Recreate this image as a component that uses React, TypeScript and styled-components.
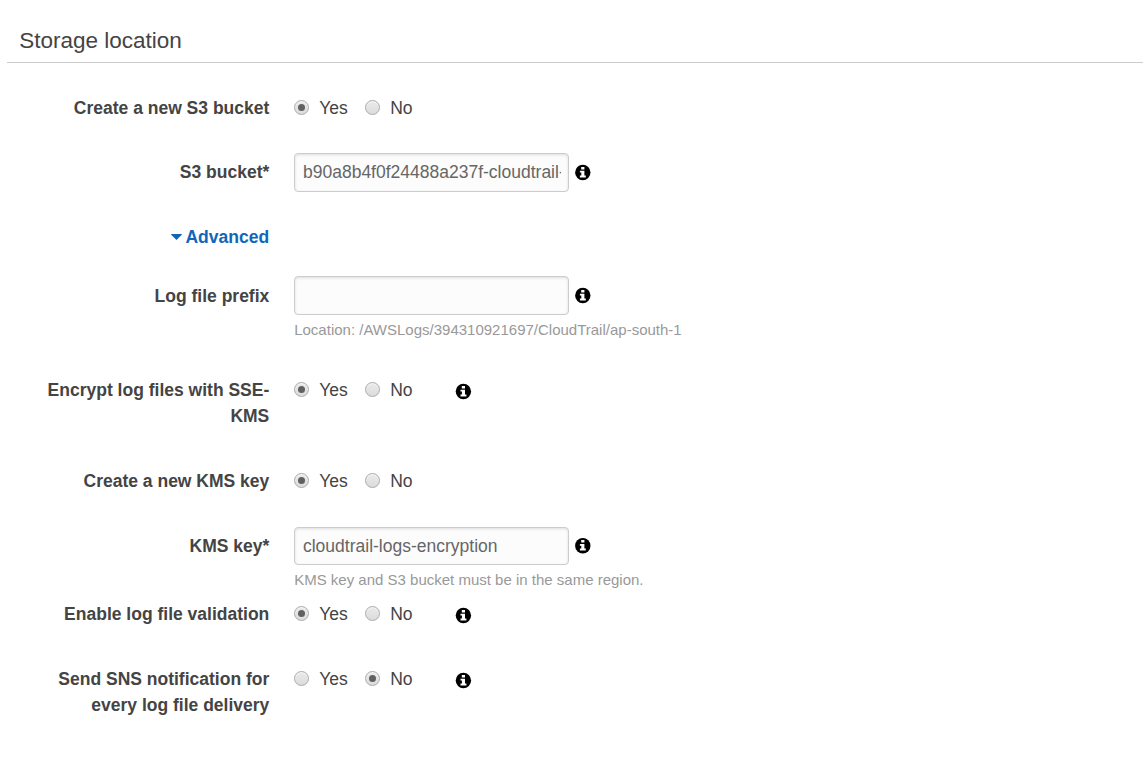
import React from "react";
import styled, { createGlobalStyle } from "styled-components";

const Global = createGlobalStyle`
  * { box-sizing: border-box; }
  body { margin: 0; background: #fff; color: #444; font: 17.5px/26px "Liberation Sans", Arial, sans-serif; overflow: hidden; }
`;
const Page = styled.main`padding: 23px 0 0 7px; height: 776px;`;
const Title = styled.h1`
  margin: 0 0 32px; padding: 0 12.25px; height: 40px; border-bottom: 1px solid #ccc;
  font-size: 22.5px; font-weight: 400; line-height: 35px;
`;
const Row = styled.div<{ $h: number }>`display: flex; height: ${(p) => p.$h}px;`;
const Label = styled.div<{ $top?: number }>`
  width: 262.3px; padding-top: ${(p) => p.$top ?? 0}px; padding-left: 30px; margin-right: 24.9px;
  font-weight: 700; text-align: right; flex: none;
`;
const Advanced = styled.span`
  color: #1166bb; display: flex; justify-content: flex-end; align-items: center; gap: 3.5px; margin-right: 0.2px;
`;
const Choices = styled.div`display: flex; height: 26px; align-items: center;`;
const Choice = styled.label<{ $w: number }>`display: flex; align-items: center; width: ${(p) => p.$w}px;`;
const Dot = styled.span<{ $on: boolean }>`
  width: 15px; height: 15px; border-radius: 50%; border: 1px solid #aaa; margin: 0 10px 1px 0;
  background: linear-gradient(#eaeaea, #dcdcdc); display: flex; align-items: center; justify-content: center;
  box-shadow: inset 0 1px 1px rgba(255, 255, 255, 0.7);
  &::after { content: ""; width: 7px; height: 7px; border-radius: 50%; background: ${(p) => (p.$on ? "#606060" : "transparent")}; }
`;
const Field = styled.div`display: flex; align-items: center; gap: 6px;`;
const Input = styled.input<{ $h?: number }>`
  width: 275px; height: ${(p) => p.$h ?? 39}px; padding: 0 7px 0 7.8px; border: 1px solid #ccc; border-radius: 4px;
  background: #fcfcfc; box-shadow: inset 0 1px 3px #ddd; color: #666; font: inherit;
`;
const Hint = styled.div`font-size: 15px; line-height: 22px; color: #999; margin-top: 4px;`;
const Icon = styled.svg<{ $inline?: boolean }>`
  display: block; flex: none; overflow: visible; margin: ${(p) => (p.$inline ? "2px 0 0 19px" : "0 0 1px")};
`;

const Info = ({ inline, dx = -0.2, dy = 0.5 }: { inline?: boolean; dx?: number; dy?: number }) => (
  <Icon $inline={inline} width="16" height="16" viewBox="0 0 16 16">
    <g transform={`translate(${dx} ${dy})`}>
      <circle cx="8" cy="8" r="7.7" fill="#000" />
      <path d="M6.4 2.4h3.2v2.5H6.4zM5.1 6.2h4.5v4.7h1.4v2H5.1v-2h1.4V8.1H5.1z" fill="#fff" />
    </g>
  </Icon>
);
const Radios = ({ value = "Yes", info }: { value?: string; info?: boolean }) => (
  <Choices>
    <Choice $w={71}><Dot $on={value === "Yes"} />Yes</Choice>
    <Choice $w={71}><Dot $on={value === "No"} />No</Choice>
    {info && <Info inline dx={0.4} />}
  </Choices>
);

export default function App() {
  return (
    <>
      <Global />
      <Page>
        <Title>Storage location</Title>
        <Row $h={58}><Label>Create a new S3 bucket</Label><Radios /></Row>
        <Row $h={71}>
          <Label $top={6}>S3 bucket*</Label>
          <div><Field><Input readOnly value="b90a8b4f0f24488a237f-cloudtrail-logs" /><Info /></Field></div>
        </Row>
        <Row $h={52}>
          <Label>
            <Advanced>
              <svg width="11" height="6" viewBox="0 0 11 6"><path d="M0.2 0h10.6v0.7L5.5 6 0.2 0.7z" fill="currentColor" /></svg>
              Advanced
            </Advanced>
          </Label>
        </Row>
        <Row $h={101}>
          <Label $top={7}>Log file prefix</Label>
          <div><Field><Input readOnly value="" /><Info /></Field><Hint>Location: /AWSLogs/394310921697/CloudTrail/ap-south-1</Hint></div>
        </Row>
        <Row $h={91}><Label>Encrypt log files with SSE-KMS</Label><Radios info /></Row>
        <Row $h={59}><Label>Create a new KMS key</Label><Radios /></Row>
        <Row $h={74}>
          <Label $top={6}>KMS key*</Label>
          <div><Field><Input readOnly $h={38} value="cloudtrail-logs-encryption" /><Info dy={-0.3} /></Field><Hint>KMS key and S3 bucket must be in the same region.</Hint></div>
        </Row>
        <Row $h={65}><Label>Enable log file validation</Label><Radios info /></Row>
        <Row $h={52}><Label>Send SNS notification for every log file delivery</Label><Radios value="No" info /></Row>
      </Page>
    </>
  );
}
